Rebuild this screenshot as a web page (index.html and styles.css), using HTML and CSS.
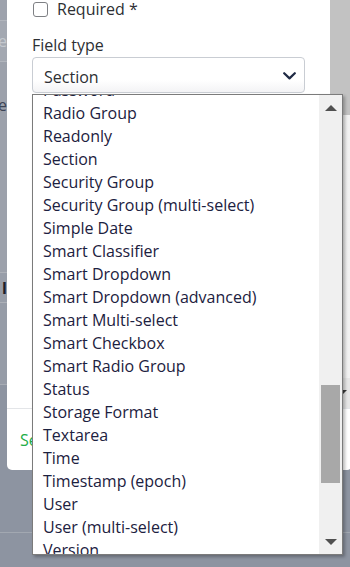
FILE: index.html
```html
<!DOCTYPE html>
<html>
<head>
<meta charset="utf-8">
<link rel="stylesheet" href="styles.css">
</head>
<body>
<div class="page">
  <div class="pg pg-top"></div>
  <div class="pg pg-box"><span class="pg-text light">e</span></div>
  <div class="pg pg-mid"><span class="pg-text dim">e</span></div>
  <div class="pg pg-gap"></div>
  <div class="pg pg-box2"><span class="pg-text dark">l</span></div>
  <div class="pg pg-gap2"></div>
  <div class="pg pg-rest"></div>
  <div class="pg pg-line"></div>
</div>

<div class="modal">
  <div class="modal-body">
    <div class="modal-content">
      <label class="check-row"><span class="checkbox"></span><span>Required *</span></label>
      <div class="field-label">Field type</div>
      <div class="select">
        <span>Section</span>
        <svg class="chev" width="13" height="8" viewBox="0 0 13 8"><path d="M1.2 1.2 L6.5 6.4 L11.8 1.2" fill="none" stroke="#1f2a44" stroke-width="2.2" stroke-linecap="round" stroke-linejoin="round"/></svg>
      </div>
    </div>
    <div class="modal-scroll">
      <div class="ms-thumb"></div>
      <div class="ms-track"></div>
      <div class="ms-btn"><span class="tri-down"></span></div>
    </div>
  </div>
  <div class="modal-footer"><span class="save">Select</span></div>
</div>

<div class="listbox">
  <div class="items">
    <div class="item">Password</div>
    <div class="item">Radio Group</div>
    <div class="item">Readonly</div>
    <div class="item">Section</div>
    <div class="item">Security Group</div>
    <div class="item">Security Group (multi-select)</div>
    <div class="item">Simple Date</div>
    <div class="item">Smart Classifier</div>
    <div class="item">Smart Dropdown</div>
    <div class="item">Smart Dropdown (advanced)</div>
    <div class="item">Smart Multi-select</div>
    <div class="item">Smart Checkbox</div>
    <div class="item">Smart Radio Group</div>
    <div class="item">Status</div>
    <div class="item">Storage Format</div>
    <div class="item">Textarea</div>
    <div class="item">Time</div>
    <div class="item">Timestamp (epoch)</div>
    <div class="item">User</div>
    <div class="item">User (multi-select)</div>
    <div class="item">Version</div>
    <div class="item">Yes/No</div>
  </div>
  <div class="lb-scroll">
    <div class="lb-btn"><span class="tri-up"></span></div>
    <div class="lb-track"><div class="lb-thumb"></div></div>
    <div class="lb-btn"><span class="tri-down dark"></span></div>
  </div>
</div>
</body>
</html>
```
FILE: styles.css
```css
html, body {
  margin: 0;
  padding: 0;
}
body {
  width: 350px;
  height: 567px;
  overflow: hidden;
  position: relative;
  background: #8d94a1;
  font-family: "Open Sans", "Noto Sans", sans-serif;
  font-size: 16px;
}

/* dimmed page behind the modal */
.page {
  width: 350px;
}
.pg {
  position: relative;
  box-sizing: border-box;
  width: 100%;
  display: flex;
  align-items: center;
  justify-content: flex-start;
  overflow: hidden;
}
.pg-text {
  width: 7px;
  display: flex;
  justify-content: flex-end;
  overflow: hidden;
  font-size: 16px;
  line-height: 20px;
}
.pg-text.light { color: #c4c8ce; }
.pg-text.dim { color: #3c4456; }
.pg-text.dark { color: #1d2029; font-weight: 700; }
.pg-top { height: 20px; background: #9da2ac; }
.pg-box { height: 42px; background: #a3a8b1; border-top: 1px solid #b2b6bd; border-bottom: 1px solid #b2b6bd; }
.pg-mid { height: 86px; background: #9ca1ab; }
.pg-gap { height: 124px; background: #9ca1ab; }
.pg-box2 { height: 31px; background: #989ea9; border-top: 1px solid #adb1b8; border-bottom: 1px solid #adb1b8; }
.pg-gap2 { height: 82px; background: #969ca7; border-bottom: 1px solid #a7acb4; }
.pg-rest { height: 148px; background: #8d94a1; border-bottom: 1px solid #a2a8b1; }
.pg-line { height: 34px; background: #8d94a1; }

/* modal */
.modal {
  position: absolute;
  left: 7px;
  top: -20px;
  width: 345px;
  background: #fff;
  border-radius: 5px;
  display: flex;
  flex-direction: column;
}
.modal-body {
  height: 428px;
  display: flex;
}
.modal-content {
  flex: 1;
  padding: 17px 0 0 25px;
  color: #2d2f33;
}
.check-row {
  display: flex;
  align-items: center;
  gap: 9px;
  height: 24px;
  line-height: 24px;
}
.checkbox {
  width: 13px;
  height: 13px;
  border: 1px solid #7e8084;
  border-radius: 3px;
  margin-left: 1px;
}
.field-label {
  margin-top: 12px;
  height: 24px;
  line-height: 24px;
}
.select {
  box-sizing: border-box;
  width: 273px;
  height: 36px;
  border: 1px solid #c9cdd3;
  border-radius: 4px;
  display: flex;
  align-items: center;
  justify-content: space-between;
  padding: 4px 8px 0 11px;
  background: linear-gradient(#fff 65%, #f3f3f5);
  color: #2d2f33;
}
.chev { margin-top: -3px; }

.modal-scroll {
  width: 22px;
  display: flex;
  flex-direction: column;
  background: #f1f1f1;
}
.ms-thumb { height: 135px; background: #c2c2c2; }
.ms-track { flex: 1; background: linear-gradient(90deg, #e9e9e9, #f3f3f3); }
.ms-btn {
  height: 30px;
  display: flex;
  align-items: center;
  justify-content: center;
  background: #e6e6e6;
}
.modal-footer {
  height: 61px;
  border-top: 1px solid #e3e5e8;
  display: flex;
  align-items: center;
  padding-left: 13px;
}
.save {
  color: #22ad46;
}

/* dropdown list (popup over content) */
.listbox {
  position: absolute;
  left: 32px;
  top: 94px;
  width: 311px;
  height: 461px;
  box-sizing: border-box;
  border: 1px solid #7b7b7b;
  background: #fff;
  display: flex;
  overflow: hidden;
  box-shadow: 2px 2px 3px rgba(0, 0, 0, 0.28);
}
.items {
  flex: 1;
  margin-top: -16px;
  color: #1c2140;
}
.item {
  height: 23px;
  line-height: 23px;
  padding-left: 10px;
  white-space: nowrap;
}
.lb-scroll {
  width: 23px;
  background: #f0f0f0;
  display: flex;
  flex-direction: column;
}
.lb-btn {
  height: 25px;
  display: flex;
  align-items: center;
  justify-content: center;
}
.lb-track {
  flex: 1;
}
.lb-thumb {
  margin: 265px 2px 0 2px;
  height: 98px;
  background: #a8a8a8;
}
.tri-up {
  width: 0;
  height: 0;
  border-left: 6px solid transparent;
  border-right: 6px solid transparent;
  border-bottom: 6px solid #505050;
}
.tri-down {
  width: 0;
  height: 0;
  border-left: 6px solid transparent;
  border-right: 6px solid transparent;
  border-top: 6px solid #3a3a3a;
}
.tri-down.dark { border-top-color: #505050; }
```
